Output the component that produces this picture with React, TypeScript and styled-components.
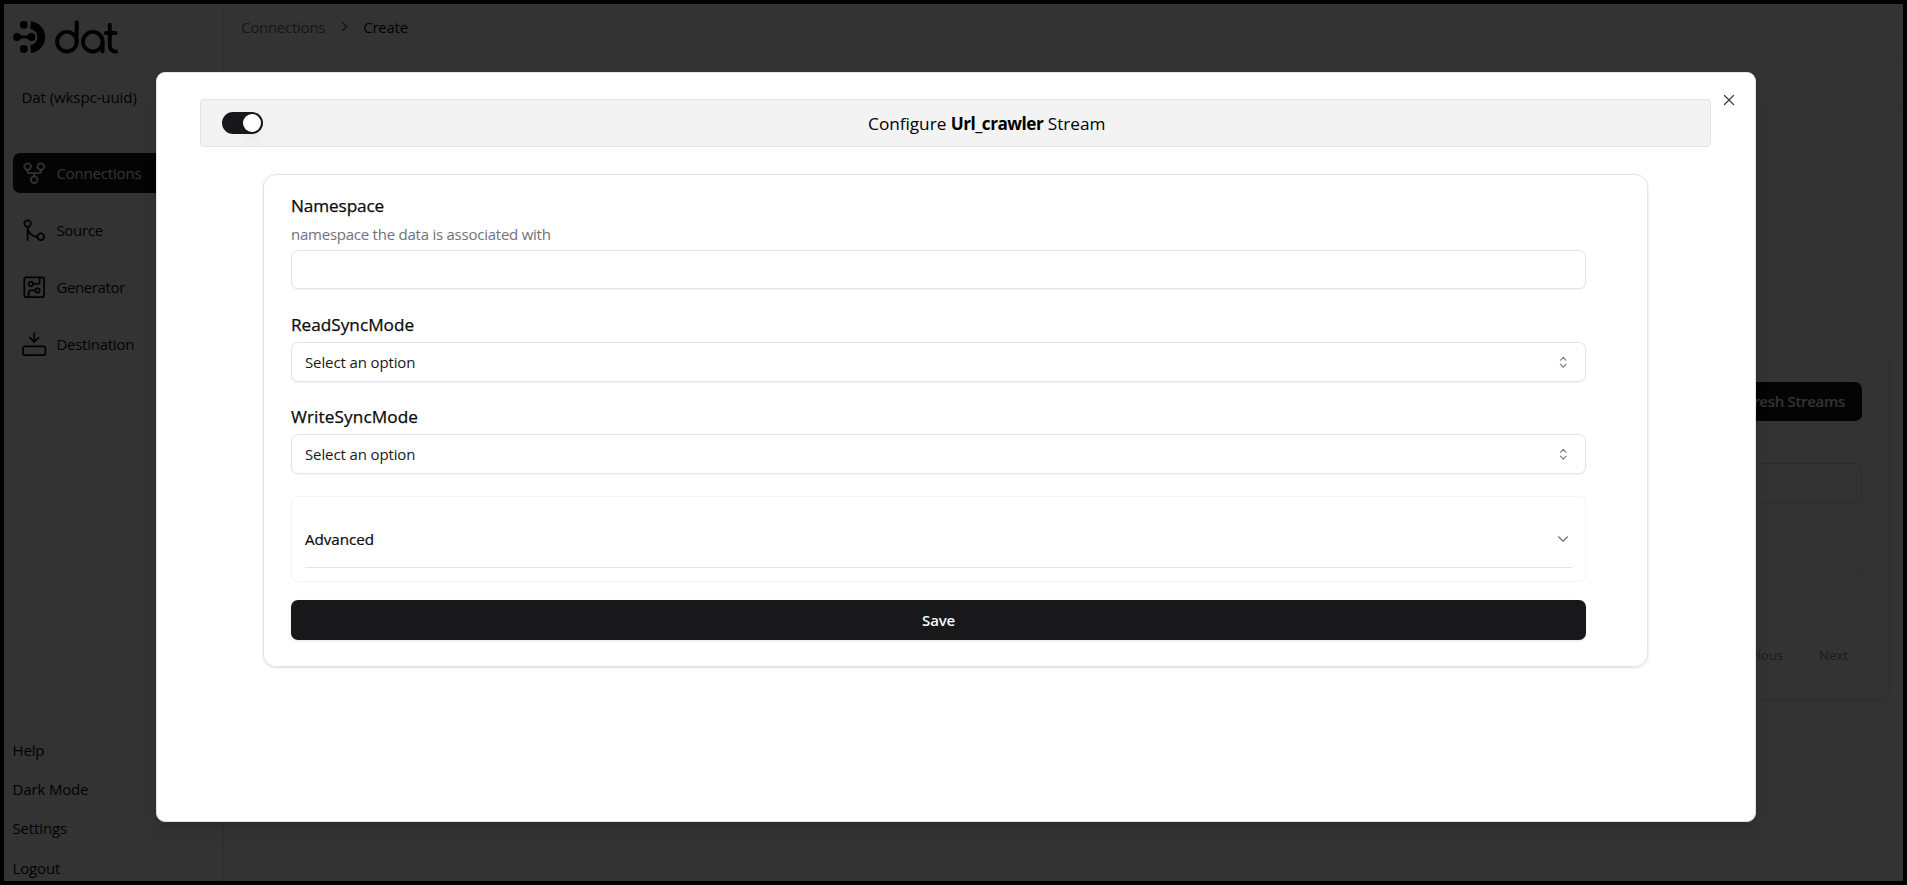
import React from "react";
import styled, { createGlobalStyle } from "styled-components";
import {
  ChevronDown,
  ChevronRight,
  CircuitBoard,
  GitFork,
  GitMerge,
  X,
} from "lucide-react";

const GlobalStyle = createGlobalStyle`
  * { box-sizing: border-box; }
  body {
    margin: 0;
    overflow: hidden;
    font-family: "Segoe UI", "Open Sans", "Noto Sans", sans-serif;
    font-size: 15px;
    letter-spacing: -0.08px;
    color: #09090b;
  }
  button { font: inherit; letter-spacing: inherit; cursor: pointer; }
`;

const Frame = styled.div`
  position: relative;
  display: flex;
  width: 1907px;
  height: 885px;
  border: 4px solid #000;
  background: #fff;
  overflow: hidden;
`;

/* Sidebar */
const Sidebar = styled.aside`
  display: flex;
  flex-direction: column;
  width: 220px;
  flex: none;
  border-right: 1px solid #e4e4e7;
`;

const Brand = styled.div`
  height: 73px;
  flex: none;
  padding: 14px 0 0 8px;
  border-bottom: 1px solid #e4e4e7;
`;

const Workspace = styled.div`
  display: flex;
  align-items: center;
  height: 41px;
  flex: none;
  padding-left: 17.5px;
  border-bottom: 1px solid #e4e4e7;
`;

const Nav = styled.nav`
  display: flex;
  flex-direction: column;
  gap: 17px;
  padding: 35px 9px 0;
`;

const NavItem = styled.a<{ $active?: boolean; $spacing?: number }>`
  display: flex;
  align-items: center;
  gap: 9px;
  height: 40px;
  padding-left: 8px;
  border-radius: 7px;
  letter-spacing: ${(p) => p.$spacing ?? -0.18}px;
  color: ${(p) => (p.$active ? "#fafafa" : "#09090b")};
  background: ${(p) => (p.$active ? "#18181b" : "transparent")};
  svg { flex: none; width: 26.4px; height: 26.4px; stroke-width: 1.6; }
`;

const FooterLinks = styled.div`
  display: flex;
  flex-direction: column;
  margin: auto 0 -6.4px;
  padding-left: 8.5px;
  letter-spacing: -0.15px;
`;

const FooterLink = styled.a`
  display: flex;
  align-items: center;
  height: 39.4px;
`;

/* Page behind the dialog */
const Page = styled.main`
  flex: 1;
  display: flex;
  flex-direction: column;
`;

const Breadcrumbs = styled.div`
  display: flex;
  align-items: center;
  height: 55px;
  padding: 0 0 9px 17px;
  border-bottom: 1px solid #e4e4e7;
  letter-spacing: -0.25px;
`;

const Crumb = styled.span<{ $muted?: boolean }>`
  color: ${(p) => (p.$muted ? "#71717a" : "#09090b")};
`;

const CrumbArrow = styled(ChevronRight)`
  width: 17px;
  height: 17px;
  margin: 0 10px 0 11px;
  stroke-width: 1.5;
  color: #52525b;
`;

const Steps = styled.div`
  height: 49px;
  border-bottom: 1px solid #e4e4e7;
`;

const StreamsCard = styled.section`
  display: flex;
  flex-direction: column;
  height: 352px;
  margin: 240px 13px 0 40px;
  padding: 33px 27px 0;
  border: 1px solid #e4e4e7;
  border-radius: 13px;
  box-shadow: 0 1px 3px rgba(0, 0, 0, 0.1);
`;

const RefreshButton = styled.button`
  align-self: flex-end;
  height: 39px;
  padding: 0 17px 2px;
  border: 0;
  border-radius: 7px;
  font-weight: 600;
  letter-spacing: -0.3px;
  color: #fafafa;
  background: #18181b;
`;

const SearchBox = styled.div`
  height: 40px;
  margin-top: 42px;
  border: 1px solid #d9d9dd;
  border-radius: 7px;
`;

const StreamTable = styled.div`
  height: 94px;
  margin-top: 22px;
  border: 1px solid #e4e4e7;
  border-radius: 6px;
`;

const TableHead = styled.div`
  height: 44px;
  border-bottom: 1px solid #e4e4e7;
`;

const Pager = styled.div`
  display: flex;
  justify-content: flex-end;
  gap: 8px;
  margin-top: 18px;
`;

const PageButton = styled.button`
  height: 35px;
  padding: 0 13px;
  border: 1px solid #e4e4e7;
  border-radius: 6px;
  font-size: 13.2px;
  font-weight: 500;
  letter-spacing: 0;
  background: #fff;
  color: #09090b;
  opacity: 0.5;
`;

/* Dialog */
const Overlay = styled.div`
  position: absolute;
  inset: 0;
  padding: 68px 0 0 152px;
  background: rgba(0, 0, 0, 0.8);
`;

const Dialog = styled.div`
  position: relative;
  width: 1600px;
  height: 750px;
  padding: 26px 44px 0 43px;
  border: 1px solid #e4e4e7;
  border-radius: 9px;
  background: #fff;
  box-shadow: 0 11px 16px -3px rgba(0, 0, 0, 0.1), 0 4px 6px -4px rgba(0, 0, 0, 0.1);
`;

const CloseButton = styled.button`
  position: absolute;
  top: 18px;
  right: 17.4px;
  display: flex;
  padding: 0;
  border: 0;
  background: none;
  opacity: 0.75;
`;

const DialogBar = styled.header`
  display: grid;
  grid-template-columns: 63px 1fr;
  align-items: center;
  height: 48px;
  padding-left: 21.4px;
  border: 1px solid #e4e4e7;
  border-radius: 4px;
  background: #f3f3f3;
`;

const Switch = styled.button`
  display: flex;
  align-items: center;
  justify-content: flex-end;
  width: 40.5px;
  height: 22px;
  padding: 0 2.4px;
  border: 0;
  border-radius: 11px;
  background: #18181b;
`;

const Thumb = styled.span`
  width: 18px;
  height: 18px;
  border-radius: 50%;
  background: #fff;
  box-shadow: 0 11px 16px -3px rgba(0, 0, 0, 0.1), 0 4px 6px -4px rgba(0, 0, 0, 0.1);
`;

const Title = styled.h2`
  margin: 0;
  padding-right: 22px;
  font-size: 17.2px;
  font-weight: 400;
  letter-spacing: -0.02px;
  text-align: center;
  color: #000;
  strong { font-weight: 700; letter-spacing: -0.5px; }
`;

const FormCard = styled.form`
  display: flex;
  flex-direction: column;
  height: 493px;
  margin: 27px 63px 0;
  padding: 18px 61px 0 27px;
  border: 1px solid #e4e4e7;
  border-radius: 13px;
  box-shadow: 0 1px 3px rgba(0, 0, 0, 0.1), 0 1px 2px -1px rgba(0, 0, 0, 0.1);
`;

const Label = styled.label<{ $gap?: number; $spacing?: number }>`
  height: 26px;
  margin-top: ${(p) => p.$gap ?? 0}px;
  font-size: 17.2px;
  line-height: 26px;
  letter-spacing: ${(p) => p.$spacing ?? 0}px;
  -webkit-text-stroke: 0.25px currentColor;
`;

const Hint = styled.p`
  height: 22px;
  margin: 4px 0 0;
  line-height: 22px;
  letter-spacing: -0.24px;
  color: #71717a;
`;

const TextInput = styled.input`
  height: 39px;
  margin-top: 5px;
  border: 1px solid #e4e4e7;
  border-radius: 7px;
  box-shadow: 0 1px 2px rgba(0, 0, 0, 0.05);
`;

const Select = styled.button`
  display: flex;
  align-items: center;
  justify-content: space-between;
  height: 40px;
  margin-top: 4px;
  padding: 0 14px 0 13px;
  border: 1px solid #e4e4e7;
  border-radius: 7px;
  letter-spacing: -0.12px;
  color: #18181b;
  background: #fff;
  box-shadow: 0 1px 2px rgba(0, 0, 0, 0.05);
`;

const Accordion = styled.div`
  height: 86px;
  margin-top: 22px;
  padding: 14px 13px 0 13px;
  border: 1px solid #f4f4f5;
  border-radius: 7px;
`;

const AccordionTrigger = styled.div`
  display: flex;
  align-items: center;
  justify-content: space-between;
  height: 57px;
  border-bottom: 1px solid #e4e4e7;
  font-size: 15.2px;
  letter-spacing: -0.05px;
  -webkit-text-stroke: 0.2px currentColor;
`;

const SaveButton = styled.button`
  height: 40px;
  margin-top: 18px;
  border: 0;
  border-radius: 7px;
  font-weight: 600;
  letter-spacing: -0.2px;
  color: #fafafa;
  background: #18181b;
  box-shadow: 0 1px 3px rgba(0, 0, 0, 0.1);
`;

const Logo = () => (
  <svg width="110" height="40" viewBox="12 18 110 40" fill="none" stroke="#000" strokeLinecap="round">
    <g fill="#000" stroke="none">
      <circle cx="23.8" cy="24.8" r="3.9" />
      <circle cx="23.8" cy="49" r="3.9" />
      <circle cx="17" cy="37" r="3.9" />
      <circle cx="31.5" cy="37" r="3.9" />
      <path d="M18 33.6C20.5 36.4 27.5 36.4 30 33.6V40.4C27.5 37.6 20.5 37.6 18 40.4Z" />
    </g>
    <path d="M30.7 25a12.2 12.2 0 0 1 0 24.2" strokeWidth="7.8" strokeLinecap="butt" />
    <g strokeWidth="3.9">
      <circle cx="66.9" cy="41.7" r="9.8" />
      <line x1="76.7" y1="22.3" x2="76.7" y2="42" />
      <circle cx="92.8" cy="41.7" r="9.8" />
      <line x1="102.6" y1="42" x2="102.6" y2="51.6" />
      <line x1="106" y1="33" x2="115.5" y2="33" />
      <path d="M109.8 24.7V45q0 6.4 6.3 6.6" />
    </g>
  </svg>
);

const TrayIcon = () => (
  <svg viewBox="0 0 24 24" fill="none" stroke="currentColor" strokeLinecap="round" strokeLinejoin="round">
    <path d="M12 2v8M16 6l-4 4-4-4" />
    <rect x="1.8" y="14" width="20.4" height="8" rx="2" />
  </svg>
);

const SortIcon = () => (
  <svg width="16.5" height="16.5" viewBox="0 0 15 15" fill="none" stroke="#09090b" strokeOpacity="0.55" strokeLinecap="round" strokeLinejoin="round">
    <path d="M4.9 5.7 7.5 3.1l2.6 2.6M4.9 9.3l2.6 2.6 2.6-2.6" />
  </svg>
);

export default function App() {
  return (
    <>
      <GlobalStyle />
      <Frame>
        <Sidebar>
          <Brand><Logo /></Brand>
          <Workspace>Dat (wkspc-uuid)</Workspace>
          <Nav>
            <NavItem $active><GitFork />Connections</NavItem>
            <NavItem $spacing={-0.3}><GitMerge />Source</NavItem>
            <NavItem $spacing={-0.38}><CircuitBoard />Generator</NavItem>
            <NavItem $spacing={-0.25}><TrayIcon />Destination</NavItem>
          </Nav>
          <FooterLinks>
            <FooterLink>Help</FooterLink>
            <FooterLink>Dark Mode</FooterLink>
            <FooterLink>Settings</FooterLink>
            <FooterLink>Logout</FooterLink>
          </FooterLinks>
        </Sidebar>
        <Page>
          <Breadcrumbs>
            <Crumb $muted>Connections</Crumb>
            <CrumbArrow />
            <Crumb>Create</Crumb>
          </Breadcrumbs>
          <Steps />
          <StreamsCard>
            <RefreshButton>Refresh Streams</RefreshButton>
            <SearchBox />
            <StreamTable><TableHead /></StreamTable>
            <Pager>
              <PageButton>Previous</PageButton>
              <PageButton>Next</PageButton>
            </Pager>
          </StreamsCard>
        </Page>
        <Overlay>
          <Dialog>
            <CloseButton aria-label="Close"><X size={18} strokeWidth={1.7} /></CloseButton>
            <DialogBar>
              <Switch role="switch" aria-checked><Thumb /></Switch>
              <Title>Configure <strong>Url_crawler</strong> Stream</Title>
            </DialogBar>
            <FormCard>
              <Label $spacing={-0.12}>Namespace</Label>
              <Hint>namespace the data is associated with</Hint>
              <TextInput />
              <Label $gap={23}>ReadSyncMode</Label>
              <Select type="button">Select an option<SortIcon /></Select>
              <Label $gap={22} $spacing={0.1}>WriteSyncMode</Label>
              <Select type="button">Select an option<SortIcon /></Select>
              <Accordion>
                <AccordionTrigger>Advanced<ChevronDown size={18} strokeWidth={1.5} color="#71717a" /></AccordionTrigger>
              </Accordion>
              <SaveButton type="button">Save</SaveButton>
            </FormCard>
          </Dialog>
        </Overlay>
      </Frame>
    </>
  );
}
